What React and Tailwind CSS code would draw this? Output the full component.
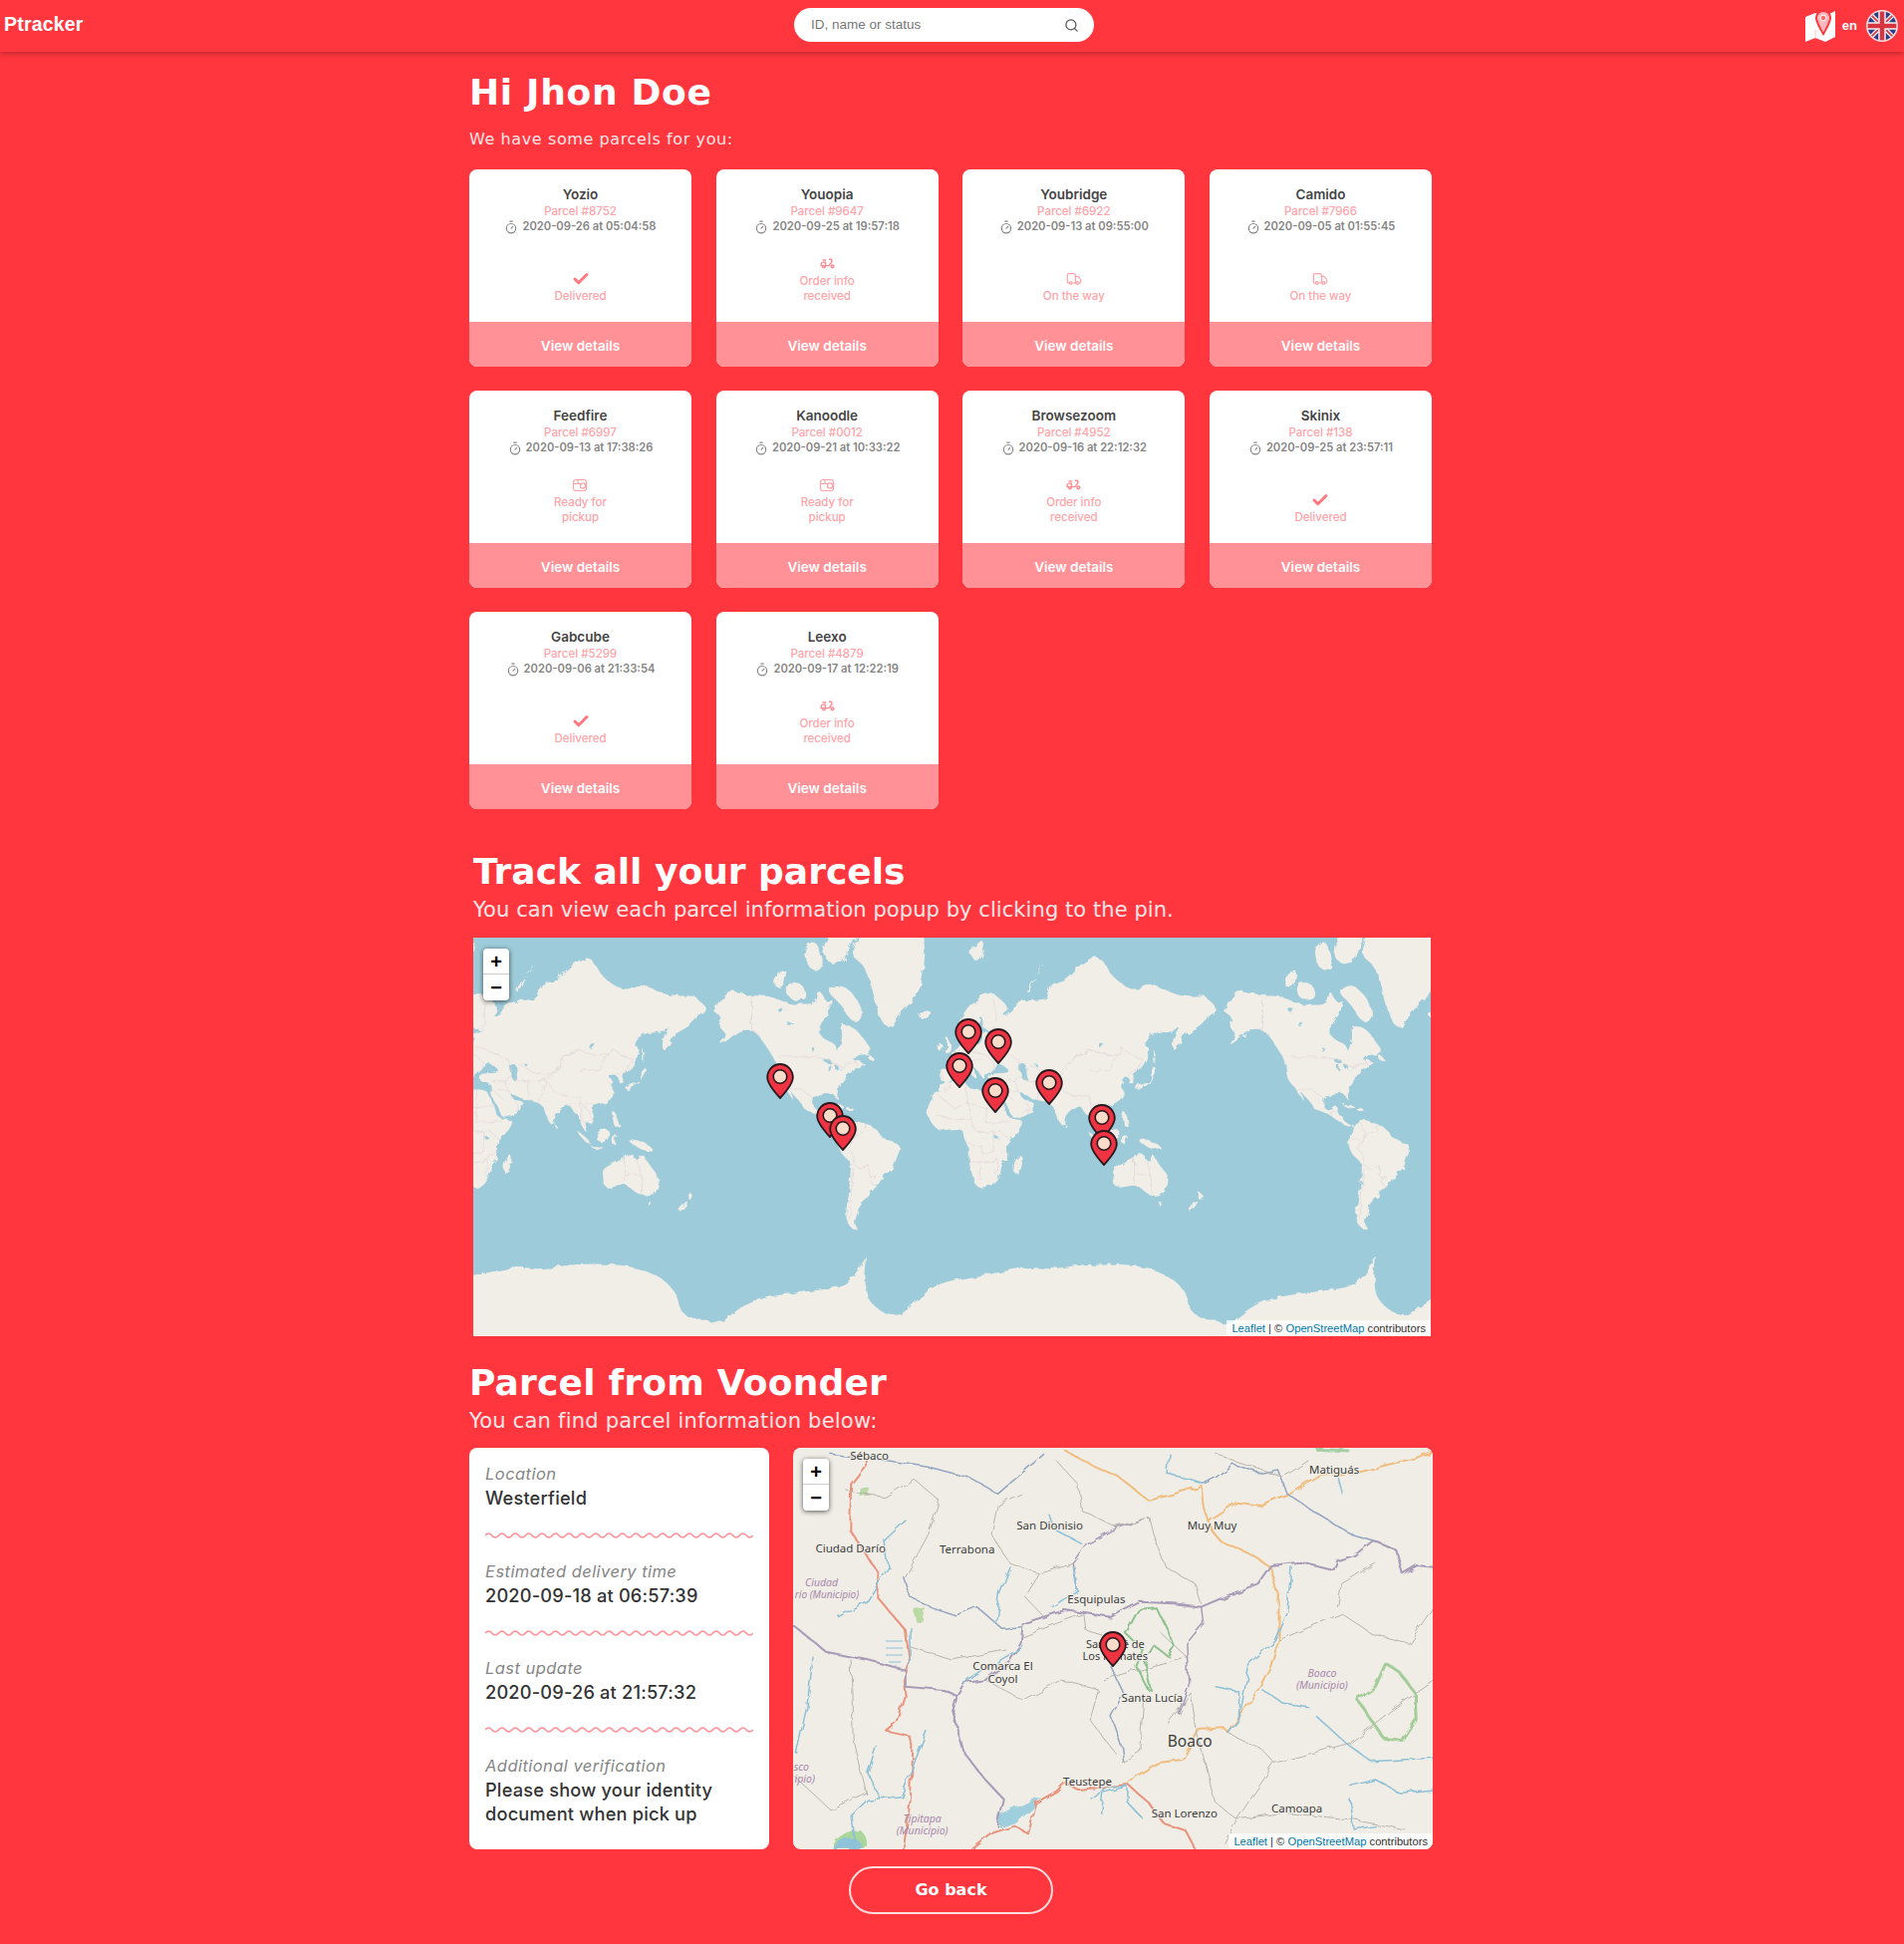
import React from "react";
import { Search, Timer, Check, Truck } from "lucide-react";
import { MdOutlineDeliveryDining } from "react-icons/md";

const R = 512 / (2 * Math.PI);
const px = (lon, lat) => [480 + (lon * 512) / 360, 200 - R * Math.log(Math.tan(Math.PI / 4 + (lat * Math.PI) / 360))];
const f = (n) => n.toFixed(1);
const smooth = (pts) => {
  const p = pts.map((q) => px(q[0], q[1]));
  const n = p.length;
  const mid = (a, b) => [(a[0] + b[0]) / 2, (a[1] + b[1]) / 2];
  const s = mid(p[n - 1], p[0]);
  let d = `M${f(s[0])} ${f(s[1])}`;
  for (let i = 0; i < n; i++) {
    const m = mid(p[i], p[(i + 1) % n]);
    d += `Q${f(p[i][0])} ${f(p[i][1])} ${f(m[0])} ${f(m[1])}`;
  }
  return d + "Z";
};
const line = (pts) => pts.map((q, i) => { const [x, y] = px(q[0], q[1]); return (i ? "L" : "M") + f(x) + " " + f(y); }).join("");

const LAND = [
  [[-168,66],[-162,70],[-156,71.5],[-141,70],[-128,70],[-115,68],[-108,68],[-95,68],[-94,72],[-88,68],[-82,69],[-86,66],[-94,61],[-92,57],[-82,55],[-80,51],[-79,54],[-77,57],[-78,62],[-70,61],[-65,59],[-60,55],[-56,52],[-60,50],[-66,50],[-70,47],[-65,48],[-64,46],[-60,46],[-66,44],[-70,43],[-71,41],[-74,40],[-76,36],[-81,31],[-80,25],[-82,27],[-84,30],[-90,29],[-94,29],[-97,27],[-98,22],[-95,18],[-91,19],[-90,21],[-87,21],[-88,16],[-84,15],[-83,11],[-80,9],[-77,8],[-80,7],[-85,10],[-90,13],[-95,16],[-104,19],[-106,23],[-112,29],[-114,31],[-110,23],[-115,29],[-118,33],[-122,37],[-124,41],[-124,47],[-128,51],[-133,56],[-140,60],[-148,60],[-152,59],[-158,56],[-165,54],[-158,58],[-162,60],[-165,62],[-161,64],[-168,66]],
  [[-73,78],[-60,82],[-30,83.5],[-18,80],[-20,74],[-24,70],[-35,66],[-43,60],[-50,63],[-54,69],[-60,76]],
  [[-80,73],[-70,71],[-62,66],[-66,62],[-73,64],[-78,68],[-88,71]],
  [[-117,73],[-105,73],[-102,69],[-115,69]],
  [[-90,80],[-70,83],[-62,82],[-78,76],[-90,77]],
  [[-125,74],[-116,76],[-118,72],[-125,72]],
  [[-105,79],[-95,80],[-90,76],[-100,75]],
  [[-59,51],[-53,47],[-56,47],[-59,48]],
  [[-77,8],[-72,12],[-62,10],[-52,5],[-50,0],[-44,-3],[-35,-6],[-39,-15],[-41,-22],[-48,-26],[-53,-34],[-58,-35],[-57,-38],[-65,-42],[-66,-47],[-69,-52],[-65,-55],[-72,-54],[-75,-48],[-73,-40],[-71,-30],[-70,-18],[-76,-14],[-81,-5],[-80,0],[-77,4]],
  [[-17,15],[-17,21],[-13,27],[-9,32],[-6,36],[3,37],[10,37],[11,33],[20,31],[25,32],[32,31],[34,28],[37,21],[39,15],[43,12],[51,12],[48,5],[40,-3],[39,-8],[40,-15],[35,-20],[35,-24],[32,-29],[26,-34],[18,-34],[15,-27],[12,-17],[13,-8],[9,-1],[9,4],[4,6],[-4,5],[-8,4],[-13,8]],
  [[-9,37],[-9,43],[-2,43],[-1,46],[-4,48],[2,51],[8,54],[9,57],[11,54],[20,54],[23,59],[30,60],[22,60],[22,65],[18,62],[17,57],[13,55],[11,59],[5,59],[5,62],[14,68],[25,71],[32,70],[41,67],[35,64],[44,66],[44,68],[54,69],[68,69],[70,73],[80,73],[90,76],[105,78],[113,74],[130,71],[140,73],[160,70],[170,70],[182,70],[182,65],[177,62],[170,60],[163,58],[162,55],[156,51],[156,57],[162,62],[155,59],[142,59],[135,54],[141,53],[135,44],[130,42],[127,40],[129,36],[126,34],[125,39],[121,40],[118,38],[122,37],[119,34],[122,30],[120,26],[114,22],[108,21],[106,19],[109,13],[105,9],[100,13],[103,2],[100,6],[98,10],[97,16],[94,16],[91,22],[87,21],[80,15],[80,10],[77,8],[73,17],[72,21],[67,24],[61,25],[57,26],[52,28],[48,30],[51,25],[56,25],[59,22],[55,17],[45,13],[43,14],[39,22],[35,28],[35,36],[28,36],[26,39],[29,41],[38,41],[41,42],[37,45],[32,46],[28,42],[24,40],[23,37],[19,42],[14,45],[18,40],[16,38],[12,43],[9,44],[3,42],[0,39],[-2,36]],
  [[-182,70],[-172,67],[-175,65],[-182,65]],
  [[114,-22],[122,-18],[129,-15],[131,-12],[136,-12],[136,-15],[140,-17],[142,-11],[146,-19],[153,-26],[153,-31],[150,-37],[145,-39],[140,-38],[135,-35],[130,-32],[124,-33],[115,-34],[114,-26]],
  [[145,-41],[148,-41],[147,-43.5],[146,-43.5]],
  [[173,-35],[178,-38],[175,-41],[174,-39]],
  [[173,-41],[174,-42],[169,-46.5],[167,-46]],
  [[49,-12],[50,-16],[47,-25],[44,-25],[44,-17]],
  [[-5,58],[-2,57],[1,52],[-5,50],[-3,54]],
  [[-10,54],[-6,55],[-6,52],[-10,52]],
  [[-24,65.5],[-14,66],[-14,64.5],[-22,63.5]],
  [[130,33],[135,35],[140,36],[141,40],[142,45],[145,43],[141,38],[140,35],[135,33],[131,31]],
  [[95,5.5],[104,-2],[106,-6],[102,-4],[97,2]],
  [[105,-6],[114,-7],[114,-8.5],[106,-7.5]],
  [[109,1],[117,7],[119,1],[116,-4],[110,-3]],
  [[120,1],[125,1],[122,-1],[123,-5],[120,-5]],
  [[131,-1],[141,-3],[147,-6],[150,-10],[143,-9],[138,-7],[133,-4]],
  [[120,18],[122,18],[124,13],[126,7],[122,7],[121,13]],
  [[80,9.5],[82,7],[80.5,6]],
  [[-85,22],[-80,23],[-74,20],[-78,20]],
  [[-74,20],[-69,19.5],[-69,18],[-74,18]],
  [[12,79],[25,80],[20,77],[15,77]],
  [[52,71],[58,74],[68,77],[60,75],[55,71]],
  [[142,54],[143,50],[143,46],[142,47]],
  [[32,35.5],[34,35.5],[33,34.6]],
  [[-200,-88],[-200,-78],[-165,-79],[-150,-76],[-130,-74],[-100,-73],[-75,-72],[-62,-66],[-60,-63],[-62,-70],[-60,-75],[-40,-78],[-25,-75],[-10,-71],[30,-69],[54,-67],[70,-68],[100,-66],[140,-67],[165,-72],[170,-78],[200,-78],[200,-88]],
];
const WATER = [
  [[47,45],[53,46],[53,40],[54,37],[50,37],[49,41]],
  [[-92,48],[-85,48],[-84,46],[-88,46]],
  [[-88,46],[-85,45],[-87,42],[-88,43]],
  [[-84,46],[-80,45],[-82,43],[-83,44]],
  [[-83,42],[-76,44],[-79,43]],
  [[-98,53],[-96,53],[-97,50]],
  [[-124,67],[-118,67],[-120,65]],
  [[-116,62],[-110,62.5],[-114,61]],
  [[58,46],[61,46],[60,44]],
  [[30,1],[34,0],[33,-2],[31,-2]],
  [[105,55],[109,55],[104,52]],
];
const BORDERS = [
  [[-123,49],[-95,49],[-88,48],[-83,46],[-76,44],[-75,45],[-70,46],[-67,47],[-67,45]],
  [[-141,70],[-141,60],[-135,58]],
  [[-117,32],[-106,32],[-102,29],[-97,26]],
  [[-92,15],[-91,18],[-89,18]],
  [[-72,12],[-70,7],[-67,2],[-70,-4],[-74,-8],[-70,-11],[-69,-18]],
  [[-60,9],[-60,5],[-65,2],[-70,-2]],
  [[-70,-18],[-65,-22],[-58,-20],[-58,-27],[-54,-26],[-57,-30],[-53,-34]],
  [[-69,-22],[-71,-40],[-72,-50]],
  [[-80,-3],[-75,-1],[-70,-4]],
  [[-9,28],[-2,32],[-1,35]],
  [[-9,28],[-5,25],[3,19],[12,23],[25,20],[37,22]],
  [[9,37],[10,30],[12,23],[14,13],[3,12],[-12,15]],
  [[25,32],[25,20],[24,10],[34,10],[42,11]],
  [[14,13],[15,7],[19,3],[30,4],[34,4],[41,-2]],
  [[12,-5],[22,-7],[22,-12],[30,-10],[30,-2],[30,4]],
  [[12,-17],[24,-18],[33,-16],[35,-12],[40,-11]],
  [[20,-18],[20,-28],[16,-29]],
  [[33,-16],[32,-22],[31,-26]],
  [[2,51],[6,49],[8,48],[7,44]],
  [[-2,43],[3,42]],[[-7,42],[-7,37]],
  [[14,54],[15,51],[24,50],[30,46],[28,42]],
  [[8,48],[13,48],[17,48],[22,48]],
  [[23,54],[32,52],[40,50],[47,48],[49,42]],
  [[28,60],[31,62],[30,69]],
  [[36,36],[44,37],[46,33],[48,30]],
  [[44,37],[48,39],[54,37],[61,36],[61,30],[61,25]],
  [[61,36],[67,37],[74,37],[72,30],[68,24]],
  [[53,42],[56,45],[66,41],[75,40],[80,42],[87,49],[98,52],[107,50],[118,50],[120,53],[127,50],[135,48],[131,43]],
  [[87,49],[80,42],[74,37],[80,30],[88,27],[97,28],[98,24],[101,21],[105,23],[108,21]],
  [[98,52],[87,49]],[[98,42],[111,43],[118,50]],
  [[98,24],[99,16],[99,10]],[[101,21],[105,16],[107,11]],
  [[129,-15],[129,-31]],[[138,-16],[141,-29],[141,-38]],[[129,-26],[141,-26]],
  [[50,17],[55,20],[52,24]],[[39,32],[48,30]],[[44,25],[36,32]],
  [[124,40],[130,43]],
];

function WorldMap() {
  const land = LAND.map(smooth).join("");
  const water = WATER.map(smooth).join("");
  const border = BORDERS.map(line).join("");
  return (
    <svg className="absolute inset-0 h-full w-full" viewBox="0 0 961 400" preserveAspectRatio="none">
      <defs>
        <filter id="coast" x="0" y="0" width="100%" height="100%" filterUnits="objectBoundingBox">
          <feTurbulence type="fractalNoise" baseFrequency="0.11" numOctaves="3" seed="4" />
          <feDisplacementMap in="SourceGraphic" scale="6" />
        </filter>
      </defs>
      <rect width="961" height="400" fill="#9dcbd9" />
      <g filter="url(#coast)">
        <rect x="-20" y="-20" width="1001" height="440" fill="none" stroke="none" />
        {[-512, 0, 512].map((dx) => (
          <g key={dx} transform={`translate(${dx} 0)`}>
            <path d={land} fill="#f1eee8" />
            <path d={water} fill="#9dcbd9" />
            <path d={border} fill="none" stroke="#ddd2d5" strokeWidth="0.6" />
          </g>
        ))}
      </g>
    </svg>
  );
}

function Pin({ x, y }) {
  return (
    <svg className="absolute" style={{ left: x, top: y }} width="28" height="36" viewBox="0 0 28 36">
      <path d="M14 1C7 1 1.2 7 1.2 14.5C1.2 22 14 35 14 35C14 35 26.8 22 26.8 14.5C26.8 7 21 1 14 1Z" fill="#ee3342" stroke="#26181c" strokeWidth="1.8" strokeLinejoin="round" />
      <circle cx="14" cy="13.5" r="6.8" fill="#fbdccb" stroke="#26181c" strokeWidth="1.6" />
    </svg>
  );
}

const PINS = [[294,126],[483,81],[513,91],[474,115],[510,140],[563.5,132],[344,165],[356.5,178],[617,167],[619,193]];

function ZoomControl() {
  return (
    <div className="absolute left-[10px] top-[11px] flex w-[26px] flex-col overflow-hidden rounded-[4px] bg-white shadow-[0_1px_5px_rgba(0,0,0,0.65)] font-['Liberation_Sans',sans-serif] text-[#000]">
      <div className="flex h-[26px] items-center justify-center border-b border-[#ccc] text-[20px] font-bold leading-none">+</div>
      <div className="flex h-[26px] items-center justify-center text-[20px] font-bold leading-none">−</div>
    </div>
  );
}

function Attribution() {
  return (
    <div className="absolute bottom-0 right-0 bg-[rgba(255,255,255,0.75)] px-[5px] font-['Liberation_Sans',sans-serif] text-[11.2px] leading-[16px] text-[#333]">
      <span className="text-[#0078a8]">Leaflet</span> | © <span className="text-[#0078a8]">OpenStreetMap</span> contributors
    </div>
  );
}

const poly = (a) => a.map((p) => p.join(",")).join(" ");
const DETAIL = [
  { c: "#e9927c", w: 2, pts: [[190,85],[150,150],[148,290],[185,360],[215,420],[212,490],[280,590],[290,690],[275,740],[280,790],[260,870],[235,895],[290,910],[298,940],[292,1100],[275,1249]] },
  { c: "#e9927c", w: 2, pts: [[440,1249],[490,1200],[540,1180],[570,1200],[590,1110],[640,1075],[660,1050],[690,1070],[810,1055],[860,1110],[895,1170],[945,1190],[970,1249]] },
  { c: "#f0bd7f", w: 2, pts: [[660,50],[720,90],[790,130],[860,200],[920,180],[985,155],[990,220],[1010,290],[1030,320],[1100,360],[1150,400],[1170,500],[1170,620],[1150,700],[1120,770],[1050,900],[1040,885],[980,890],[940,980],[880,990],[830,1030],[810,1055]] },
  { c: "#f0bd7f", w: 2, pts: [[1000,260],[1070,205],[1130,215],[1190,185],[1270,125],[1360,115],[1420,95],[1500,70],[1538,50]] },
  { c: "#a79bb8", w: 2, pts: [[1538,400],[1500,395],[1465,420],[1450,350],[1395,320],[1350,365],[1310,380],[1300,410],[1220,385],[1150,395],[1120,450],[1050,485],[985,520],[920,510],[840,505],[770,550],[660,530],[560,570],[555,630],[530,680],[470,740],[420,750],[400,790],[390,830],[420,960],[470,1040],[515,1100],[500,1180]] },
  { c: "#a79bb8", w: 2, pts: [[12,575],[90,655],[190,680],[280,710],[280,760],[370,770],[400,785]] },
  { c: "#a79bb8", w: 1.5, pts: [[985,520],[990,570],[950,630],[955,760],[930,840]] },
  { c: "#a79bb8", w: 1.5, pts: [[860,250],[770,290],[715,330],[680,390],[690,470]] },
  { c: "#93a6c0", w: 1.5, pts: [[100,60],[240,80],[340,100],[430,130],[500,180],[610,60]] },
  { c: "#93a6c0", w: 1.5, pts: [[990,150],[1020,130],[1060,90],[1130,120],[1170,110],[1190,180],[1250,230],[1340,300],[1395,320]] },
  { c: "#93a6c0", w: 1.5, pts: [[275,430],[290,490],[340,520],[400,545],[450,520],[510,585],[555,580]] },
  { c: "#93a6c0", w: 1.5, pts: [[770,700],[800,780],[770,850],[795,940],[800,990]] },
  { c: "#8dc0d6", w: 1.5, pts: [[290,580],[290,700]] },
  { c: "#8dc0d6", w: 1.5, pts: [[560,640],[480,700],[420,750]] },
  { c: "#8dc0d6", w: 1.5, pts: [[1200,400],[1190,530],[1160,620],[1100,690],[1090,760],[1075,860]] },
  { c: "#8dc0d6", w: 1.5, pts: [[1020,760],[1075,775],[1075,860],[1050,900]] },
  { c: "#8dc0d6", w: 1.5, pts: [[1130,770],[1180,810],[1240,820]] },
  { c: "#8dc0d6", w: 1.5, pts: [[1260,850],[1330,930],[1390,985],[1538,975]] },
  { c: "#8dc0d6", w: 1.5, pts: [[1340,1060],[1400,1040],[1460,1080],[1538,1070]] },
  { c: "#8dc0d6", w: 1.5, pts: [[1340,1100],[1350,1190],[1400,1180]] },
  { c: "#8dc0d6", w: 1.5, pts: [[725,1100],[760,1060],[810,1060],[750,1080],[745,1140]] },
  { c: "#8dc0d6", w: 1.5, pts: [[810,1060],[810,1110],[840,1150]] },
  { c: "#8dc0d6", w: 1.5, pts: [[620,240],[640,290],[700,330]] },
  { c: "#8dc0d6", w: 1.5, pts: [[530,400],[505,480],[495,570]] },
  { c: "#8dc0d6", w: 1.5, pts: [[280,260],[230,320],[240,400],[190,500],[120,550]] },
  { c: "#8dc0d6", w: 1.5, pts: [[60,670],[45,820],[20,960]] },
  { c: "#8dc0d6", w: 1.5, pts: [[160,1249],[150,1150],[190,1100],[270,1090],[330,895]] },
  { c: "#8dc0d6", w: 1.5, pts: [[210,940],[190,1020],[220,1100]] },
  { c: "#8dc0d6", w: 1.5, pts: [[910,60],[905,120],[940,130],[990,150]] },
  { c: "#8dc0d6", w: 1.5, pts: [[680,400],[690,470],[630,520]] },
  { c: "#8dc0d6", w: 1.5, pts: [[1310,130],[1320,180]] },
  { c: "#b7b4ad", w: 1, pts: [[360,200],[300,135],[230,190],[140,170]] },
  { c: "#b7b4ad", w: 1, pts: [[360,200],[335,300],[280,430]] },
  { c: "#b7b4ad", w: 1, pts: [[640,80],[690,150],[700,230],[780,280],[860,250],[870,300],[900,400],[970,450],[985,510]] },
  { c: "#b7b4ad", w: 1, pts: [[555,180],[500,210],[485,300],[530,390],[600,420],[680,390]] },
  { c: "#b7b4ad", w: 1, pts: [[600,420],[565,490],[610,550]] },
  { c: "#b7b4ad", w: 1, pts: [[560,610],[640,570],[705,540],[710,590],[760,610]] },
  { c: "#b7b4ad", w: 1, pts: [[290,640],[390,680],[520,650]] },
  { c: "#b7b4ad", w: 1, pts: [[470,740],[560,800],[650,740],[740,770],[720,860],[780,960]] },
  { c: "#b7b4ad", w: 1, pts: [[150,680],[155,920],[185,1080],[100,1130],[15,1030]] },
  { c: "#b7b4ad", w: 1, pts: [[890,600],[950,670],[830,710],[750,740]] },
  { c: "#b7b4ad", w: 1, pts: [[850,800],[840,960],[800,990]] },
  { c: "#b7b4ad", w: 1, pts: [[900,880],[960,780],[975,900],[1020,1110],[1070,1160],[1040,1230]] },
  { c: "#b7b4ad", w: 1, pts: [[1170,620],[1320,540],[1390,600],[1480,630],[1538,520]] },
  { c: "#b7b4ad", w: 1, pts: [[1310,520],[1320,450],[1400,390]] },
  { c: "#b7b4ad", w: 1, pts: [[1050,900],[1130,950],[1160,990],[1340,930],[1440,830],[1538,745]] },
  { c: "#b7b4ad", w: 1, pts: [[1160,990],[1070,1160],[1180,1140],[1340,1160],[1470,1190]] },
  { c: "#b7b4ad", w: 1, pts: [[1020,60],[1180,130],[1240,80]] },
  { c: "#8fc28e", w: 2, pts: [[860,770],[830,700],[845,650],[805,600],[835,530],[880,525],[905,590],[920,640],[905,668],[875,640],[850,690],[865,770]] },
  { c: "#a4cd9a", w: 3, pts: [[1358,800],[1400,760],[1425,690],[1460,720],[1495,780],[1497,860],[1465,925],[1420,915],[1390,860],[1358,800]] },
  { c: "#a7cfa4", w: 3, pts: [[1260,45],[1335,50]] },
];
const PLACES = [
  ["Sébaco",194,66,11.5],["Matiguás",1302,107,11.5],["San Dionisio",624,275,11.5],["Muy Muy",1011,275,11.5],["Ciudad Darío",149,344,11.5],["Terrabona",427,346,11.5],["Esquipulas",735,498,11.5],
  ["San José de",780,631,11],["Los Remates",780,669,11],["Comarca El",512,699,11.5],["Coyol",512,737,11.5],["Santa Lucía",868,793,11.5],["Boaco",958,929,15.5],["Teustepe",714,1046,11.5],["San Lorenzo",945,1141,11.5],["Camoapa",1213,1127,11.5],
];
const MUNI = [["Ciudad",80,445],["río (Municipio)",92,482],["Boaco",1273,719],["(Municipio)",1273,755],["Tipitapa",320,1157],["(Municipio)",320,1192],["sco",32,1000],["ipio)",40,1036]];
const mx = (z) => (z - 12) * 0.421;
const my = (z) => (z - 41) / 3;

function DetailMap() {
  return (
    <svg className="absolute inset-0 h-full w-full" viewBox="0 0 642 403" preserveAspectRatio="none">
      <defs>
        <filter id="wiggle" x="-2%" y="-2%" width="104%" height="104%">
          <feTurbulence type="fractalNoise" baseFrequency="0.07" numOctaves="2" seed="7" />
          <feDisplacementMap in="SourceGraphic" scale="7" />
        </filter>
      </defs>
      <rect width="642" height="403" fill="#f0ede6" />
      <g filter="url(#wiggle)">
        <rect width="642" height="403" fill="#f0ede6" />
        <g transform="scale(0.421 0.3333) translate(-12 -41)" fill="none" strokeLinejoin="round" strokeLinecap="round">
          <path d="M105 1249C110 1215 135 1195 170 1190C195 1215 190 1249 180 1249Z" fill="#a9d69a" />
          <path d="M105 1249C125 1215 150 1205 170 1225L180 1249Z" fill="#8fc3da" />
          <path d="M502 1150L600 1090L585 1120L540 1170L505 1185Z" fill="#9fcfdd" />
          <path d="M170 160L192 160L192 185L170 185Z M300 530L328 525L322 565L305 565Z" fill="#b9d9a5" />
          {DETAIL.map((d, i) => (
            <polyline key={i} points={poly(d.pts)} stroke={d.c} strokeWidth={d.w} vectorEffect="non-scaling-stroke" />
          ))}
        </g>
      </g>
      <path d="M93 194H110M93 201H110M93 208H110M96 215H108" stroke="#8dc0d6" strokeWidth="1" />
      {PLACES.map(([t, x, y, s]) => (
        <text key={t} x={mx(x)} y={my(y) + 4} textAnchor="middle" fontSize={s} fill="#3d3d3d" fontFamily="Noto Sans, sans-serif" stroke="#f0ede6" strokeWidth="2" paintOrder="stroke">{t}</text>
      ))}
      {MUNI.map(([t, x, y], i) => (
        <text key={i} x={i === 1 ? 34 : mx(x)} y={my(y) + 4} textAnchor="middle" fontSize={i === 1 ? 10 : 10.5} fontStyle="italic" fill="#a888ac" fontFamily="Noto Sans, sans-serif">{t}</text>
      ))}
    </svg>
  );
}

function Flag() {
  return (
    <svg width="32" height="32" viewBox="0 0 32 32" className="shrink-0">
      <defs><clipPath id="flagc"><circle cx="16" cy="16" r="15" /></clipPath></defs>
      <g clipPath="url(#flagc)">
        <rect width="32" height="32" fill="#2b3f87" />
        <path d="M0 0L32 32M32 0L0 32" stroke="#f4f0f2" strokeWidth="4.4" />
        <path d="M0 0L32 32M32 0L0 32" stroke="#d8343f" strokeWidth="1.6" />
        <path d="M16 0V32M0 16H32" stroke="#f4f0f2" strokeWidth="7.5" />
        <path d="M16 0V32M0 16H32" stroke="#d8343f" strokeWidth="4.5" />
      </g>
      <circle cx="16" cy="16" r="15.2" fill="none" stroke="#f6dfe0" strokeWidth="1.6" />
    </svg>
  );
}

function MapIcon() {
  return (
    <svg width="30" height="32" viewBox="0 0 30 32" className="shrink-0">
      <path d="M0 7L10 3L20 6L30 1V27L20 32L10 28L0 32Z" fill="#fff" />
      <path d="M18 0C13.5 0 10 3.5 10 8C10 13 18 26 18 26C18 26 26 13 26 8C26 3.5 22.5 0 18 0Z" fill="#ff363e" />
      <path d="M18 2C14.6 2 12 4.8 12 8C12 11.5 18 22.5 18 22.5C18 22.5 24 11.5 24 8C24 4.8 21.4 2 18 2Z" fill="#ffb9bc" />
      <circle cx="18" cy="8" r="2.8" fill="#ff6a70" stroke="#fff" strokeWidth="1" />
      <path d="M10 20V29" stroke="#ffb0b3" strokeWidth="0.8" />
    </svg>
  );
}

function BoxIcon() {
  return (
    <svg width="16" height="16" viewBox="0 0 16 16" fill="none" stroke="#ffa3a8" strokeWidth="1.2">
      <rect x="1.5" y="2.5" width="13" height="11" rx="2.5" />
      <path d="M1.5 6.5H10M6 2.5V6.5" />
      <circle cx="11" cy="8.5" r="2.6" />
    </svg>
  );
}

const STATUS = {
  d: { icon: <Check size={18} strokeWidth={4} color="#ff7880" />, text: ["Delivered"] },
  o: { icon: <MdOutlineDeliveryDining size={17} color="#ff8c92" />, text: ["Order info", "received"] },
  w: { icon: <Truck size={16} strokeWidth={1.8} color="#ffa3a8" />, text: ["On the way"] },
  r: { icon: <BoxIcon />, text: ["Ready for", "pickup"] },
};

const CARDS = [
  ["Yozio","8752","2020-09-26 at 05:04:58","d"],["Youopia","9647","2020-09-25 at 19:57:18","o"],["Youbridge","6922","2020-09-13 at 09:55:00","w"],["Camido","7966","2020-09-05 at 01:55:45","w"],
  ["Feedfire","6997","2020-09-13 at 17:38:26","r"],["Kanoodle","0012","2020-09-21 at 10:33:22","r"],["Browsezoom","4952","2020-09-16 at 22:12:32","o"],["Skinix","138","2020-09-25 at 23:57:11","d"],
  ["Gabcube","5299","2020-09-06 at 21:33:54","d"],["Leexo","4879","2020-09-17 at 12:22:19","o"],
];

function Card({ name, id, date, s }) {
  const st = STATUS[s];
  return (
    <div className="flex h-[198px] flex-col overflow-hidden rounded-[8px] bg-white text-center font-['Inter',sans-serif]">
      <div className="flex flex-1 flex-col items-center pb-[18.5px] pt-[16px]">
        <div className="text-[13.5px] font-semibold leading-[18px] text-[#444]">{name}</div>
        <div className="text-[11.5px] font-medium leading-[16px] text-[#ffa3a8]">Parcel #{id}</div>
        <div className="flex items-center gap-[4px] text-[11.2px] font-semibold leading-[15px] text-[#858585]">
          <Timer size={14} strokeWidth={2} />
          <span>{date}</span>
        </div>
        <div className="mt-auto flex flex-col items-center">
          <div className="mb-[2px] flex h-[16px] items-center justify-center">{st.icon}</div>
          {st.text.map((t) => (
            <div key={t} className="text-[11.5px] font-medium leading-[15px] text-[#ffa3a8]">{t}</div>
          ))}
        </div>
      </div>
      <div className="flex h-[45px] items-center justify-center bg-[#ff9197] pt-[3px] text-[13.5px] font-semibold text-white">View details</div>
    </div>
  );
}

function Wave() {
  let d = "M0 4";
  for (let i = 0; i < 20; i++) d += "q3.36 -4 6.72 0t6.72 0";
  return (
    <svg width="269" height="8" viewBox="0 0 269 8" className="mb-[21.5px] mt-[21.5px] block" fill="none">
      <path d={d} stroke="#ff9197" strokeWidth="1.6" />
    </svg>
  );
}

function Info({ label, children }) {
  return (
    <div>
      <div className="mb-[2px] text-[16.5px] italic leading-[20px] tracking-[0.45px] text-[#858585]">{label}</div>
      <div className="text-[18.2px] font-medium leading-[24.5px] tracking-[0.2px] text-[#333]">{children}</div>
    </div>
  );
}

export default function App() {
  return (
    <div className="min-h-[1951px] bg-[#ff363e] pb-[30px] font-['DejaVu_Sans',sans-serif] text-white">
      <header className="flex h-[52px] items-center justify-between bg-[#ff363e] pl-[4px] pr-[6px] shadow-[0_2px_5px_rgba(0,0,0,0.25)]">
        <div className="-mt-[4px] w-[793px] font-['Liberation_Sans',sans-serif] text-[19.5px] font-bold leading-[48px] tracking-[0.2px]">Ptracker</div>
        <div className="mb-[2px] flex h-[34px] w-[301px] items-center rounded-full bg-white pl-[17px] pr-[15px]">
          <input placeholder="ID, name or status" className="min-w-0 flex-1 bg-transparent font-['Liberation_Sans',sans-serif] text-[13.5px] text-[#666] outline-none placeholder:text-[#777]" />
          <Search size={15} strokeWidth={2} color="#555" />
        </div>
        <div className="ml-auto flex items-center">
          <MapIcon />
          <span className="ml-[7px] mr-[9px] font-['Liberation_Sans',sans-serif] text-[13px] font-bold">en</span>
          <Flag />
        </div>
      </header>

      <main className="ml-[471px] w-[967px]">
        <h1 className="pt-[19px] text-[36px] font-bold leading-[44px] tracking-[0.7px]">Hi Jhon Doe</h1>
        <p className="mt-[15px] text-[16px] leading-[20px] tracking-[0.6px] text-[#ffe6e7]">We have some parcels for you:</p>
        <div className="mt-[20px] grid grid-cols-[repeat(4,223px)] gap-x-[24.67px] gap-y-[24px]">
          {CARDS.map((c) => <Card key={c[0]} name={c[0]} id={c[1]} date={c[2]} s={c[3]} />)}
        </div>

        <section className="ml-[4px]">
          <h2 className="mt-[41px] text-[36px] font-bold leading-[44px]">Track all your parcels</h2>
          <p className="mt-[2px] text-[21px] leading-[28px] tracking-[0.07px] text-[#ffe6e7]">You can view each parcel information popup by clicking to the pin.</p>
          <div className="relative mt-[14px] h-[400px] w-[961px] overflow-hidden">
            <WorldMap />
            {PINS.map(([x, y], i) => <Pin key={i} x={x} y={y} />)}
            <ZoomControl />
            <Attribution />
          </div>
        </section>

        <h2 className="mt-[25px] text-[36px] font-bold leading-[44px] tracking-[0.2px]">Parcel from Voonder</h2>
        <p className="mt-[2px] text-[21px] leading-[28px] tracking-[0.22px] text-[#ffe6e7]">You can find parcel information below:</p>
        <div className="mt-[13px] flex h-[403px] gap-[24px]">
          <div className="w-[301px] rounded-[8px] bg-white px-[16px] pt-[16px] font-['Inter',sans-serif]">
            <Info label="Location">Westerfield</Info>
            <Wave />
            <Info label="Estimated delivery time">2020-09-18 at 06:57:39</Info>
            <Wave />
            <Info label="Last update">2020-09-26 at 21:57:32</Info>
            <Wave />
            <Info label="Additional verification">Please show your identity<br />document when pick up</Info>
          </div>
          <div className="relative w-[642px] overflow-hidden rounded-[8px]">
            <DetailMap />
            <Pin x={307} y={184} />
            <ZoomControl />
            <Attribution />
          </div>
        </div>
        <button className="ml-[381px] mt-[17px] flex h-[48px] w-[205px] items-center justify-center rounded-full border-2 border-[#ffdcdc] text-[16px] font-bold">Go back</button>
      </main>
    </div>
  );
}
